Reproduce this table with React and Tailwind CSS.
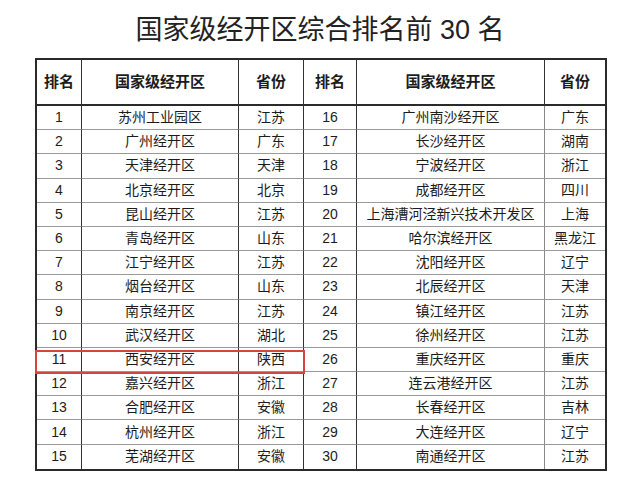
import React from "react";

const left = [
  ["1", "苏州工业园区", "江苏"],
  ["2", "广州经开区", "广东"],
  ["3", "天津经开区", "天津"],
  ["4", "北京经开区", "北京"],
  ["5", "昆山经开区", "江苏"],
  ["6", "青岛经开区", "山东"],
  ["7", "江宁经开区", "江苏"],
  ["8", "烟台经开区", "山东"],
  ["9", "南京经开区", "江苏"],
  ["10", "武汉经开区", "湖北"],
  ["11", "西安经开区", "陕西"],
  ["12", "嘉兴经开区", "浙江"],
  ["13", "合肥经开区", "安徽"],
  ["14", "杭州经开区", "浙江"],
  ["15", "芜湖经开区", "安徽"],
];
const right = [
  ["16", "广州南沙经开区", "广东"],
  ["17", "长沙经开区", "湖南"],
  ["18", "宁波经开区", "浙江"],
  ["19", "成都经开区", "四川"],
  ["20", "上海漕河泾新兴技术开发区", "上海"],
  ["21", "哈尔滨经开区", "黑龙江"],
  ["22", "沈阳经开区", "辽宁"],
  ["23", "北辰经开区", "天津"],
  ["24", "镇江经开区", "江苏"],
  ["25", "徐州经开区", "江苏"],
  ["26", "重庆经开区", "重庆"],
  ["27", "连云港经开区", "江苏"],
  ["28", "长春经开区", "吉林"],
  ["29", "大连经开区", "辽宁"],
  ["30", "南通经开区", "江苏"],
];

const headers = ["排名", "国家级经开区", "省份", "排名", "国家级经开区", "省份"];

export default function App() {
  return (
    <div
      className="w-[640px] h-[489px] bg-white text-[#1c1c1c] overflow-hidden"
      style={{ fontFamily: '"Liberation Sans", "Noto Sans CJK SC", sans-serif' }}
    >
      <div className="pt-[16px] text-center text-[27px] leading-[28px] text-[#222]">
        国家级经开区综合排名前 30 名
      </div>
      <div className="relative ml-[35px] mt-[14px] w-[572px]">
        <div className="grid grid-cols-[45px_157px_65px_53px_188px_60px] border-2 border-[#2a2a2a]">
          {headers.map((h, i) => (
            <div
              key={"h" + i}
              className={
                "h-[46px] flex items-center justify-center font-bold text-[15px] border-b-2 border-b-[#2a2a2a] " +
                (i < 5 ? "border-r border-r-[#333]" : "")
              }
            >
              {h}
            </div>
          ))}
          {left.map((l, r) => {
            const cells = [...l, ...right[r]];
            const last = r === left.length - 1;
            return cells.map((c, i) => (
              <div
                key={r + "-" + i}
                className={
                  "h-[24.2px] flex items-center justify-center text-[14px] whitespace-nowrap " +
                  (last ? "" : "border-b border-b-[#9a9a9a] ") +
                  (i < 5 ? (i === 4 ? "border-r border-r-[#888]" : "border-r border-r-[#333]") : "")
                }
              >
                {c}
              </div>
            ));
          })}
        </div>
        <div className="absolute left-0 top-[292px] w-[270px] h-[24px] border-2 border-[#d3453e] pointer-events-none" />
      </div>
    </div>
  );
}
